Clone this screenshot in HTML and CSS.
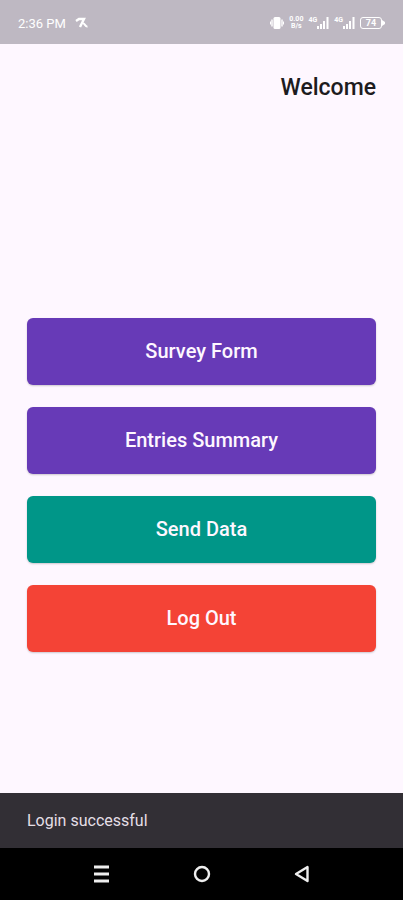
FILE: index.html
```
<!DOCTYPE html>
<html lang="en">
<head>
    <meta charset="UTF-8">
    <meta name="viewport" content="width=device-width, initial-scale=1.0">
    <title>Welcome</title>
    <link rel="stylesheet" href="styles.css">
</head>
<body>
    <!-- Status bar -->
    <div class="status_bar">
        <span class="time">2:36 PM</span>
        <svg class="app_icon" width="14" height="12" viewBox="0 0 14 12">
            <path d="M1 4L4 2H9L5 10" fill="none" stroke="#fff" stroke-width="2.4"/>
            <path d="M8 6.5C10 6 10 10 12.500 9.500" fill="none" stroke="#fff" stroke-width="2"/>
        </svg>
        <div class="status_icons">
            <svg width="14" height="12" viewBox="0 0 14 12">
                <rect x="3.5" y="0" width="7" height="12" rx="1.5" fill="#fff"/>
                <path d="M2 2.500V9.500M12 2.500V9.500" stroke="#fff" stroke-width="1.4"/>
                <path d="M.5 4.500V7.500M13.500 4.500V7.500" stroke="#fff"/>
            </svg>
            <div class="speed"><span>0.00</span><span>B/s</span></div>
            <div class="signal">
                <span>4G</span>
                <svg width="12" height="12" viewBox="0 0 12 12">
                    <path d="M1 9V12M4 7V12M7 4V12M10.5 0V12" stroke="#fff" stroke-width="2"/>
                </svg>
            </div>
            <div class="signal">
                <span>4G</span>
                <svg width="12" height="12" viewBox="0 0 12 12">
                    <path d="M1 9V12M4 7V12M7 4V12M10.5 0V12" stroke="#fff" stroke-width="2"/>
                </svg>
            </div>
            <div class="battery">
                <span>74</span>
                <svg width="3" height="6" viewBox="0 0 3 6"><path d="M0 0L3 2V4L0 6Z" fill="#fff"/></svg>
            </div>
        </div>
    </div>

    <!-- Menu -->
    <main>
        <h1>Welcome</h1>
        <div class="menu">
            <button type="button" class="btn">Survey Form</button>
            <button type="button" class="btn">Entries Summary</button>
            <button type="button" class="btn send">Send Data</button>
            <button type="button" class="btn logout">Log Out</button>
        </div>
    </main>

    <!-- Message -->
    <div class="snackbar" role="status">Login successful</div>

    <!-- System navigation -->
    <nav class="nav_bar">
        <button type="button" aria-label="Recent apps">
            <svg width="20" height="20" viewBox="0 0 20 20">
                <path d="M2 3H17M2 10H17M2 17H17" stroke="#eee" stroke-width="3"/>
            </svg>
        </button>
        <button type="button" aria-label="Home">
            <svg width="20" height="20" viewBox="0 0 20 20">
                <circle cx="10" cy="10" r="7" fill="none" stroke="#eee" stroke-width="2.4"/>
            </svg>
        </button>
        <button type="button" aria-label="Back">
            <svg width="20" height="20" viewBox="0 0 20 20">
                <path d="M15.500 3V17L4 10Z" fill="none" stroke="#eee" stroke-width="2.400" stroke-linejoin="round"/>
            </svg>
        </button>
    </nav>
</body>
</html>
```
FILE: styles.css
```
*{
    margin: 0;
    padding: 0;
    box-sizing: border-box;
}
body{
    display: flex;
    flex-direction: column;
    min-height: 100vh;
    background-color: #fef7ff;
    color: #1d1b20;
    font-family: Roboto, sans-serif;
}
.status_bar{
    display: flex;
    align-items: center;
    height: 44px;
    padding: 2px 18px 0;
    background-color: #beb8c2;
    color: white;
}
.time{
    font-size: 13px;
}
.app_icon{
    margin-left: 9px;
}
.status_icons{
    display: flex;
    align-items: center;
    gap: 5px;
    margin-left: auto;
}
.speed{
    display: flex;
    flex-direction: column;
    align-items: center;
    font-size: 7px;
    font-weight: 700;
    line-height: 7px;
}
.signal{
    display: flex;
    font-size: 7px;
    font-weight: 700;
    line-height: 7px;
}
.battery{
    display: flex;
    align-items: center;
}
.battery span{
    width: 22px;
    border: 1px solid white;
    border-radius: 3px;
    font-size: 9px;
    font-weight: 700;
    line-height: 10px;
    text-align: center;
}
main{
    flex: 1;
    display: flex;
    flex-direction: column;
    padding: 28px 27px 0;
}
h1{
    font-size: 23px;
    font-weight: 500;
    line-height: 32px;
    text-align: right;
}
.menu{
    flex: 1;
    display: flex;
    flex-direction: column;
    justify-content: center;
    gap: 22px;
    padding-top: 72px;
}
.btn{
    height: 67px;
    border: none;
    border-radius: 6px;
    background-color: #673ab7;
    box-shadow: 0 1px 2px rgba(0, 0, 0, 0.2);
    color: #fef7ff;
    font-family: inherit;
    font-size: 20px;
    font-weight: 500;
    cursor: pointer;
}
.send{
    background-color: #009688;
}
.logout{
    background-color: #f44336;
}
.snackbar{
    padding: 18px 27px 17px;
    background-color: #322f35;
    color: #e4dfe6;
    font-size: 16px;
    line-height: 20px;
}
.nav_bar{
    display: flex;
    justify-content: center;
    gap: 80px;
    padding: 16px 0;
    background-color: black;
}
.nav_bar button{
    height: 20px;
    border: none;
    background: none;
    cursor: pointer;
}
```
